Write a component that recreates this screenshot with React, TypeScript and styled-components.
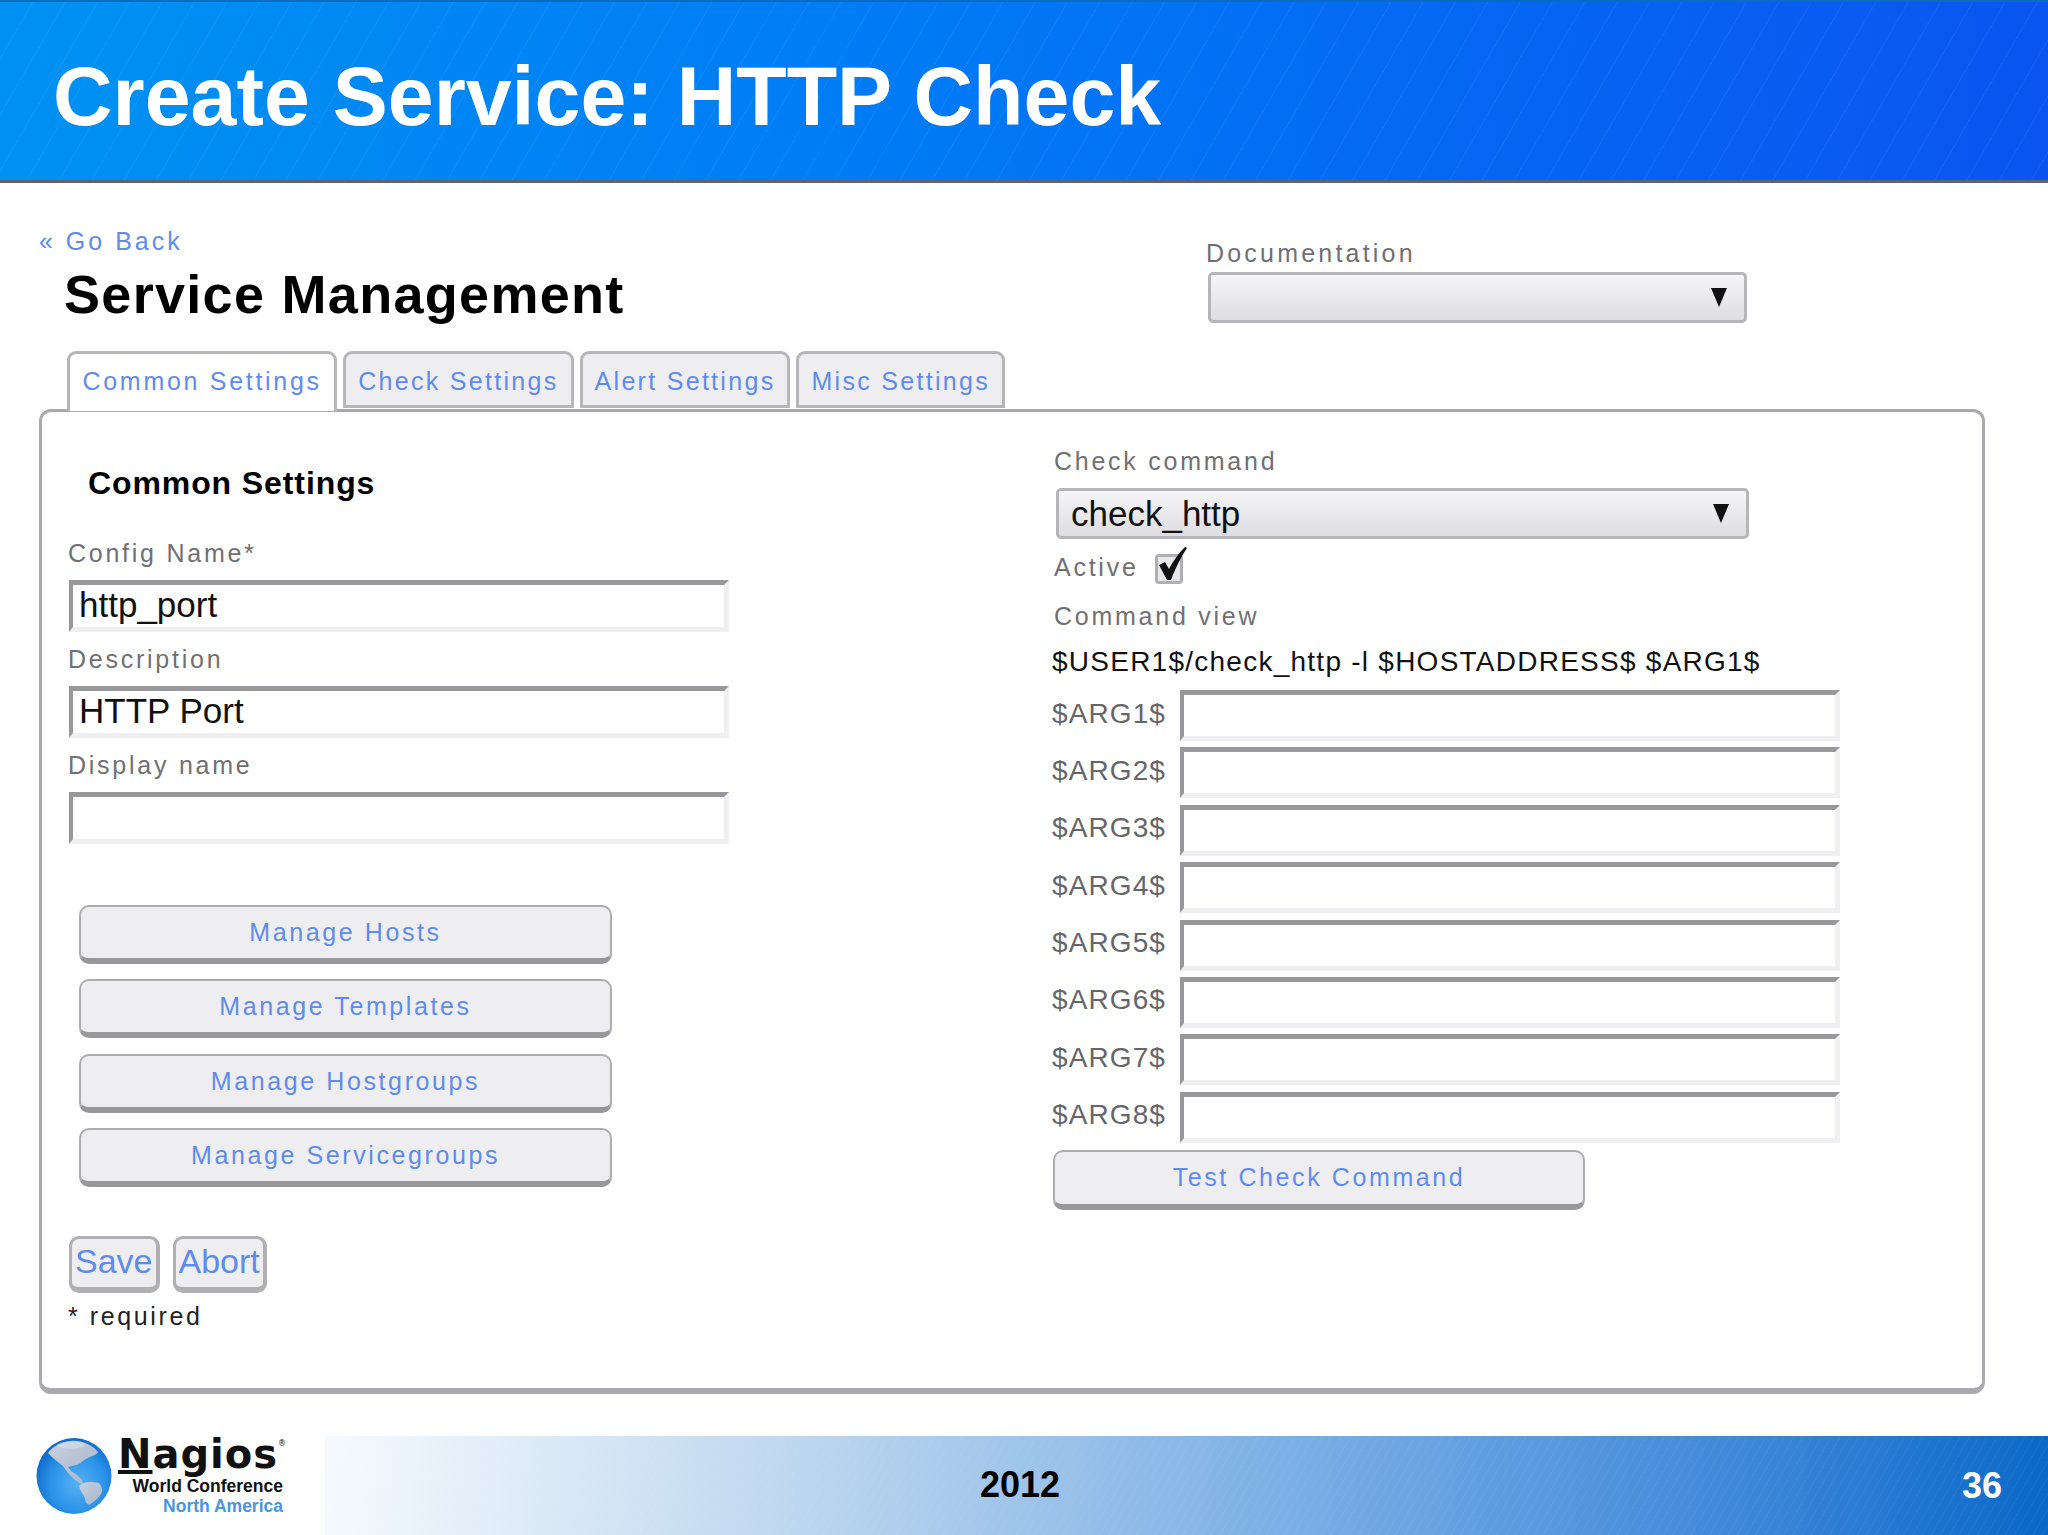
import styled, { createGlobalStyle } from "styled-components";

const ARGS = [1, 2, 3, 4, 5, 6, 7, 8];
const TABS = ["Common Settings", "Check Settings", "Alert Settings", "Misc Settings"];
const MANAGE = ["Manage Hosts", "Manage Templates", "Manage Hostgroups", "Manage Servicegroups"];

function Globe() {
  return (
    <svg width="78" height="78" viewBox="0 0 78 78">
      <defs>
        <radialGradient id="sea" cx="0.55" cy="0.6" r="0.62">
          <stop offset="0" stopColor="#58b2f4" />
          <stop offset="0.6" stopColor="#2a92e8" />
          <stop offset="1" stopColor="#0c66c8" />
        </radialGradient>
        <linearGradient id="land" x1="0" y1="0" x2="1" y2="1">
          <stop offset="0" stopColor="#c8d0dc" />
          <stop offset="1" stopColor="#a6b6cc" />
        </linearGradient>
      </defs>
      <ellipse cx="39" cy="39" rx="37.5" ry="38" fill="url(#sea)" />
      <path
        d="M13 16C18 9 26 5 36 4c10-1 20 3 27 11-2 4-8 4-12 7-4 2-7 6-10 6l-8 2 3 4 6 4 5 5 1 3-2 1-7-5-6-6-5-7-5-4-5-4z"
        fill="url(#land)"
      />
      <path
        d="M44 49c3-3 6-4 10-4 4 0 7 0 10 1 2 3 4 6 3 9-2 5-7 9-13 13-2-1-4-3-4-6 0-3-3-5-4-8-1-2-2-4-2-5z"
        fill="url(#land)"
      />
      <ellipse cx="36" cy="8" rx="14" ry="3.5" fill="#ffffff" opacity="0.25" />
    </svg>
  );
}

export default function App() {
  return (
    <>
      <GlobalStyle />
      <Page>
        <Header>
          <Title>Create Service: HTTP Check</Title>
        </Header>

        <Main>
          <TopRow>
            <div>
              <BackLink>« Go Back</BackLink>
              <PageTitle>Service Management</PageTitle>
            </div>
            <DocBlock>
              <DocLabel>Documentation</DocLabel>
              <Select $width={539} />
            </DocBlock>
          </TopRow>

          <TabBar>
            {TABS.map((tab, i) => (
              <Tab key={tab} $active={i === 0}>
                {tab}
              </Tab>
            ))}
          </TabBar>

          <Panel>
            <LeftColumn>
              <Heading>Common Settings</Heading>
              <Label>Config Name*</Label>
              <Input>http_port</Input>
              <Label>Description</Label>
              <Input>HTTP Port</Input>
              <Label>Display name</Label>
              <Input />
              <ManageList>
                {MANAGE.map((label) => (
                  <WideButton key={label} $width={533}>
                    {label}
                  </WideButton>
                ))}
              </ManageList>
              <Actions>
                <SmallButton>Save</SmallButton>
                <SmallButton>Abort</SmallButton>
              </Actions>
              <Required>* required</Required>
            </LeftColumn>

            <RightColumn>
              <Label>Check command</Label>
              <CommandSelect $width={693}>check_http</CommandSelect>
              <ActiveRow>
                <Label>Active</Label>
                <CheckBox>
                  <svg width="34" height="38" viewBox="0 0 34 38">
                    <path d="M5 19l6-3 4 7C19 15 25 7 31 1l2 1C27 11 21 23 17 34h-4z" fill="#111" />
                  </svg>
                </CheckBox>
              </ActiveRow>
              <CommandLabel>Command view</CommandLabel>
              <CommandText>$USER1$/check_http -l $HOSTADDRESS$ $ARG1$</CommandText>
              <ArgList>
                {ARGS.map((n) => (
                  <ArgRow key={n}>
                    <ArgName>${`ARG${n}`}$</ArgName>
                    <ArgInput />
                  </ArgRow>
                ))}
              </ArgList>
              <TestButton $width={532}>Test Check Command</TestButton>
            </RightColumn>
          </Panel>
        </Main>

        <Footer>
          <Logo>
            <Globe />
            <LogoText>
              <LogoName>
                <u>N</u>agios<sup>®</sup>
              </LogoName>
              <LogoLine>World Conference</LogoLine>
              <LogoLine $blue>North America</LogoLine>
            </LogoText>
          </Logo>
          <FooterBar>
            <Year>2012</Year>
            <PageNo>36</PageNo>
          </FooterBar>
        </Footer>
      </Page>
    </>
  );
}

const GlobalStyle = createGlobalStyle`
  html, body {
    margin: 0;
    padding: 0;
    background: #fff;
  }
  * {
    box-sizing: border-box;
  }
`;

const Page = styled.div`
  width: 2048px;
  height: 1535px;
  display: flex;
  flex-direction: column;
  overflow: hidden;
  font-family: "Liberation Sans", Arial, sans-serif;
  background: #fff;
`;

const Header = styled.header`
  height: 183px;
  flex: none;
  display: flex;
  align-items: center;
  padding: 10px 0 0 53px;
  border-top: 2px solid #0a6cc0;
  border-bottom: 3px solid #5c6670;
  background:
    repeating-linear-gradient(120deg, rgba(255, 255, 255, 0.05) 0 1px, transparent 1px 28px),
    linear-gradient(95deg, #0092f2 0%, #007af6 45%, #0b54f0 100%);
`;

const Title = styled.h1`
  margin: 0;
  font-size: 82.5px;
  font-weight: 700;
  color: #fff;
  white-space: nowrap;
`;

const Main = styled.main`
  flex: 1;
  padding: 0 63px 0 39px;
`;

const TopRow = styled.div`
  height: 168px;
  display: flex;
  justify-content: space-between;
  padding-top: 42px;
`;

const BackLink = styled.div`
  font-size: 25px;
  line-height: 32px;
  letter-spacing: 3px;
  color: #5f8cec;
`;

const PageTitle = styled.h2`
  margin: 7px 0 0 25px;
  font-size: 54px;
  line-height: 60px;
  letter-spacing: 1.3px;
  font-weight: 700;
  color: #000;
`;

const DocBlock = styled.div`
  padding-top: 10px;
  margin-right: 238px;
  width: 541px;
`;

const Label = styled.div`
  height: 36px;
  margin-bottom: 9px;
  font-size: 25px;
  line-height: 36px;
  letter-spacing: 2.75px;
  color: #707074;
  white-space: nowrap;
`;

const DocLabel = styled(Label)`
  margin-bottom: 1px;
  letter-spacing: 3.2px;
`;

const Select = styled.div<{ $width: number }>`
  width: ${(p) => p.$width}px;
  height: 51px;
  margin-left: 2px;
  padding: 0 17px 0 12px;
  display: flex;
  align-items: center;
  font-size: 35px;
  color: #111;
  border: 3px solid #b6b6ba;
  border-radius: 5px;
  background: linear-gradient(#f5f5f7, #dedee2);

  &::after {
    content: "";
    margin-left: auto;
    border-left: 8px solid transparent;
    border-right: 8px solid transparent;
    border-top: 19px solid #111;
  }
`;

const CommandSelect = styled(Select)`
  margin-top: 1px;
`;

const TabBar = styled.div`
  height: 58px;
  display: flex;
  gap: 6px;
  padding-left: 28px;
  position: relative;
  z-index: 1;
`;

const Tab = styled.div<{ $active?: boolean }>`
  height: ${(p) => (p.$active ? "60px" : "57px")};
  padding: 0 ${(p) => (p.$active ? "12.5px" : "12px")};
  font-size: 25px;
  line-height: 54px;
  letter-spacing: ${(p) => (p.$active ? "2.7px" : "2.3px")};
  color: #5f8cec;
  white-space: nowrap;
  border: 3px solid #b6b6ba;
  border-radius: 9px 9px 0 0;
  background: ${(p) => (p.$active ? "#fff" : "#eeeef0")};
  ${(p) => p.$active && "border-bottom: none;"}
`;

const Panel = styled.section`
  height: 985px;
  display: grid;
  grid-template-columns: 1012px 1fr;
  border: 3px solid #aaaaae;
  border-bottom-width: 6px;
  border-radius: 12px;
  background: #fff;
`;

const LeftColumn = styled.div`
  padding: 51px 0 0 26px;
`;

const RightColumn = styled.div`
  padding-top: 31px;
`;

const Heading = styled.h3`
  margin: 0 0 32px 20px;
  font-size: 32px;
  line-height: 40px;
  letter-spacing: 0.9px;
  font-weight: 700;
  color: #000;
`;

const Input = styled.div`
  width: 660px;
  height: 52px;
  margin: 0 0 9px 1px;
  padding-left: 6px;
  font-size: 35px;
  line-height: 40px;
  color: #111;
  background: #fff;
  border-style: solid;
  border-width: 5px 5px 5px 4px;
  border-color: #98989c #f0f0f2 #f0f0f2 #98989c;
`;

const ManageList = styled.div`
  margin-top: 61px;
  margin-left: 11px;
  display: flex;
  flex-direction: column;
  gap: 15.3px;
`;

const WideButton = styled.div<{ $width: number }>`
  width: ${(p) => p.$width}px;
  height: 59px;
  display: flex;
  align-items: center;
  justify-content: center;
  font-size: 25px;
  letter-spacing: 2.6px;
  color: #5f8cec;
  white-space: nowrap;
  border: 2px solid #acacb0;
  border-bottom: 6px solid #98989c;
  border-radius: 10px;
  background: #eeeef0;
`;

const Actions = styled.div`
  margin-top: 49px;
  margin-left: 1px;
  display: flex;
  gap: 13px;
`;

const SmallButton = styled.div`
  height: 57px;
  padding: 0 3px 3px;
  display: flex;
  align-items: center;
  font-size: 34px;
  color: #5f8cec;
  border: 3px solid #b0b0b4;
  border-bottom-width: 6px;
  border-right-width: 4px;
  border-radius: 10px;
  background: #eeeef0;
`;

const Required = styled.div`
  margin-top: 5px;
  height: 36px;
  font-size: 25px;
  line-height: 36px;
  letter-spacing: 2.6px;
  color: #222;
`;

const ActiveRow = styled.div`
  margin-top: 10px;
  height: 36px;
  display: flex;
  gap: 16px;
`;

const CheckBox = styled.div`
  position: relative;
  width: 28px;
  height: 30px;
  margin-top: 5px;
  border: 3px solid #b0b0b4;
  border-radius: 4px;
  background: #e8e8ea;

  svg {
    position: absolute;
    left: -4px;
    top: -11px;
  }
`;

const CommandLabel = styled(Label)`
  margin: 13px 0 0;
`;

const CommandText = styled.div`
  margin: 10px 0 0 -2px;
  height: 36px;
  font-size: 28px;
  line-height: 36px;
  letter-spacing: 1.25px;
  color: #111;
  white-space: nowrap;
`;

const ArgList = styled.div`
  margin: 10px 0 0 -2px;
  display: flex;
  flex-direction: column;
  gap: 6.4px;
`;

const ArgRow = styled.div`
  display: flex;
  align-items: center;
`;

const ArgName = styled.div`
  width: 128px;
  padding-bottom: 4px;
  font-size: 28px;
  letter-spacing: 1.1px;
  color: #66666a;
`;

const ArgInput = styled(Input)`
  height: 51px;
  margin: 0;
`;

const TestButton = styled(WideButton)`
  margin: 7px 0 0 -1px;
  height: 60px;
`;

const Footer = styled.footer`
  height: 99px;
  flex: none;
  display: flex;
`;

const Logo = styled.div`
  width: 325px;
  flex: none;
  display: flex;
  padding: 1px 0 0 35px;
  background: #fff;
`;

const LogoText = styled.div`
  width: 170px;
  display: flex;
  flex-direction: column;
  align-items: flex-end;
`;

const LogoName = styled.div`
  width: 100%;
  margin: -3px 0 3px;
  padding-left: 5px;
  font-family: "DejaVu Sans", sans-serif;
  font-size: 40px;
  line-height: 40px;
  letter-spacing: 1px;
  font-weight: 700;
  color: #111;
  white-space: nowrap;

  sup {
    font-size: 8px;
    font-weight: 400;
    vertical-align: 22px;
    line-height: 0;
    letter-spacing: 0;
  }
`;

const LogoLine = styled.div<{ $blue?: boolean }>`
  font-size: 17.5px;
  line-height: 19.5px;
  font-weight: 700;
  white-space: nowrap;
  color: ${(p) => (p.$blue ? "#4a96d8" : "#111")};
`;

const FooterBar = styled.div`
  flex: 1;
  display: flex;
  align-items: center;
  justify-content: flex-end;
  padding: 0 46px 0 0;
  position: relative;
  background:
    repeating-linear-gradient(120deg, rgba(255, 255, 255, 0.04) 0 1px, transparent 1px 8px),
    linear-gradient(95deg, #f6fafe 0%, #bcd6ef 28%, #72a9e4 60%, #3f88da 82%, #0a68c8 100%);
`;

const Year = styled.div`
  position: absolute;
  left: 655px;
  top: 27px;
  font-size: 36px;
  line-height: 44px;
  font-weight: 700;
  color: #000;
`;

const PageNo = styled.div`
  font-size: 36px;
  font-weight: 700;
  color: #fff;
`;
